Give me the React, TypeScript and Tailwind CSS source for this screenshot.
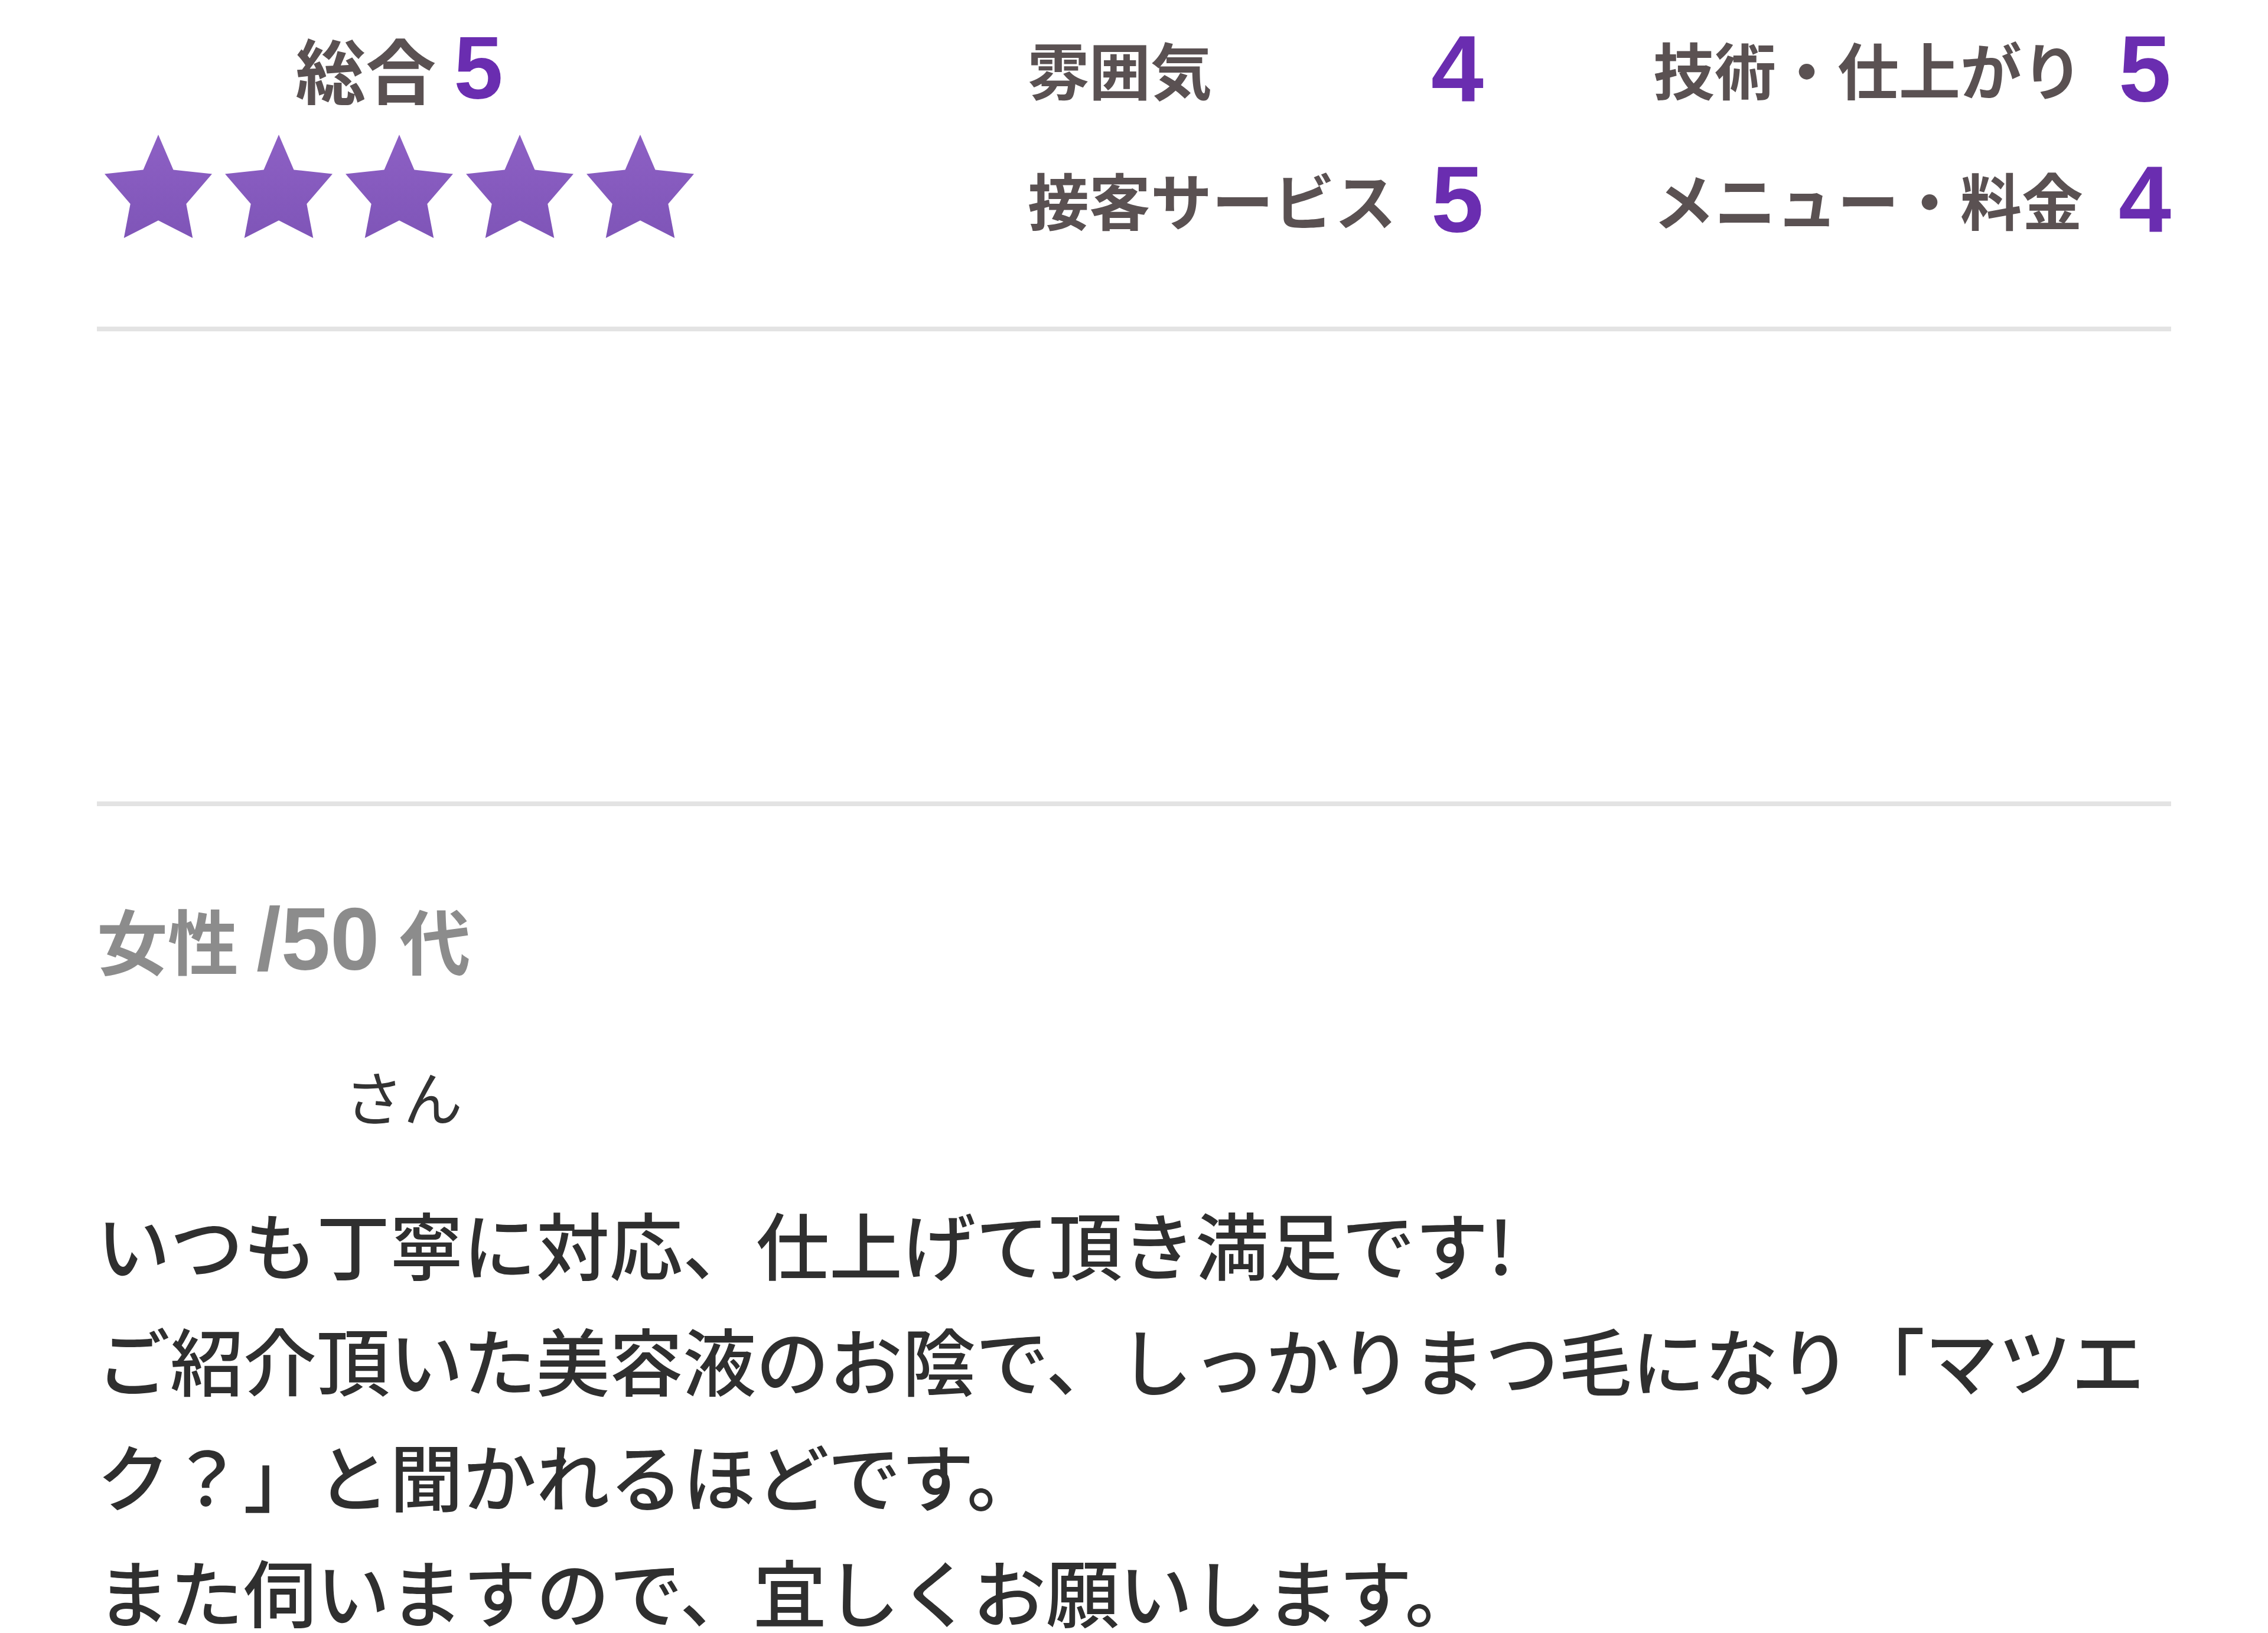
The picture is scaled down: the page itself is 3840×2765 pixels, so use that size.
import React from 'react'

const jp = "font-['Noto_Sans_CJK_JP','Noto_Sans',sans-serif]"
const num = "font-['Liberation_Sans',Arial,sans-serif]"

function Star() {
  return (
    <svg width="182" height="175" viewBox="0 0 100 100" preserveAspectRatio="none">
      <defs>
        <linearGradient id="starFill" x1="0" y1="0" x2="0" y2="1">
          <stop offset="0" stopColor="#8d60c4" />
          <stop offset="1" stopColor="#7f55b8" />
        </linearGradient>
      </defs>
      <polygon
        points="50,0 64,34 100,38 76,67 82,100 50,83 18,100 24,67 0,38 36,34"
        fill="url(#starFill)"
      />
    </svg>
  )
}

const ratings = [
  { label: '雰囲気', value: '4' },
  { label: '技術・仕上がり', value: '5' },
  { label: '接客サービス', value: '5' },
  { label: 'メニュー・料金', value: '4' },
]

export default function App() {
  return (
    <div className={`w-[3840px] h-[2765px] overflow-hidden bg-white px-[164px] ${jp}`}>
      {/* scores */}
      <div className="flex h-[553px]">
        <div className="flex w-[1024px] flex-col items-center pt-[44px]">
          <div className="flex items-baseline leading-[143px]">
            <span className="text-[119px] font-bold text-[#5a5152]">総合</span>
            <span className={`ml-[30px] text-[150px] font-bold text-[#6a2db0] ${num}`}>5</span>
          </div>
          <div className="mt-[41px] flex gap-[22px]">
            {[0, 1, 2, 3, 4].map((i) => (
              <Star key={i} />
            ))}
          </div>
        </div>
        <div className="ml-auto grid grid-cols-[772px_877px] gap-x-[287px] auto-rows-[221px] pt-[5px]">
          {ratings.map((r) => (
            <div key={r.label} className="flex items-center justify-between">
              <span className="text-[104px] font-bold leading-none text-[#5a5152]">{r.label}</span>
              <span className={`text-[160px] font-bold leading-none text-[#6a2db0] ${num}`}>{r.value}</span>
            </div>
          ))}
        </div>
      </div>
      <div className="h-[8px] bg-[#e3e3e3]" />
      <div className="h-[796px]" />
      <div className="h-[8px] bg-[#e3e3e3]" />

      {/* reviewer */}
      <div className="mt-[145px] flex items-baseline text-[120px] font-bold leading-[160px] text-[#8c8c8c]">
        <span>女性</span>
        <span className={`ml-[30px] mr-[34px] text-[150px] ${num}`}>/50</span>
        <span>代</span>
      </div>
      <div className="mt-[115px] pl-[419px] text-[100px] leading-[140px] text-[#333333]">さん</div>

      {/* comment */}
      <p className="mt-[81px] text-[124px] font-medium leading-[196px] text-[#2f2f2f]">
        いつも丁寧に対応、仕上げて頂き満足です!
        <br />
        ご紹介頂いた美容液のお陰で、しっかりまつ毛になり「マツエク？」と聞かれるほどです。
        <br />
        また伺いますので、宜しくお願いします。
      </p>
    </div>
  )
}
